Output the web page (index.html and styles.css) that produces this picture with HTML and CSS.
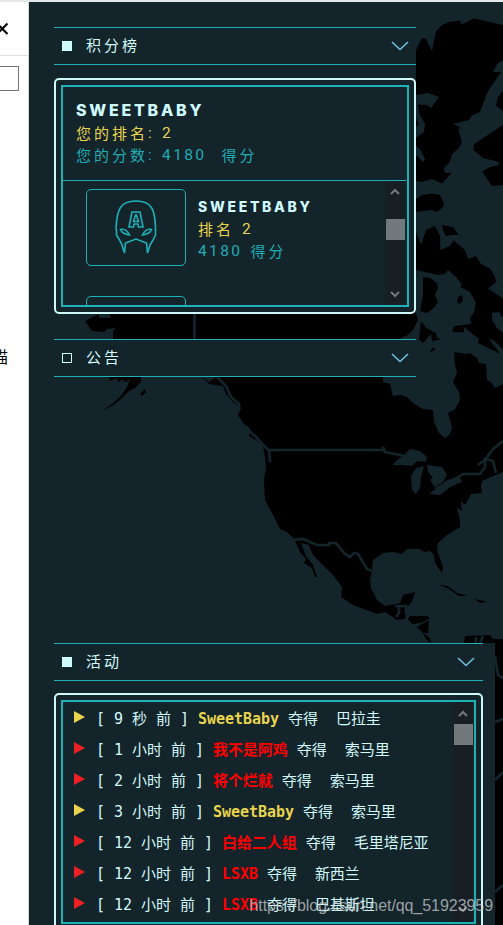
FILE: index.html
```html
<!DOCTYPE html>
<html lang="zh">
<head>
<meta charset="utf-8">
<title>积分榜</title>
<link rel="stylesheet" href="styles.css">
</head>
<body>
<div class="app">
  <aside class="side">
    <div class="side-head"><svg class="close" width="14" height="14" viewBox="0 0 14 14"><path d="M2 1.500 12.500 12M2 12 12.500 1.500"/></svg></div>
    <div class="side-input"></div>
    <div class="side-text">描</div>
  </aside>
  <main class="stage">
    <svg class="map" width="503" height="925" viewBox="0 0 503 925">
      <g class="land">
        <path d="M416 50 422 38 426 39 432 51 436 31 442 25 449 22 460 20.500 461.500 24.500 474 18.500 503 25V60L497 64 493 72H501L487 93 480 112 471 116 469 120 453 124 460 127 458.500 130 462 142 458 149 452 154 450 162 444 168 445 173 452 172.500 442 183.500 432 179 422 182 416 181Z"/>
        <path d="M503 91 498 97 496 106 503 111ZM503 125 474 144 473.500 150 483 158 499 162V165L490 167 482 171.500 492 186 503 185Z"/>
        <path d="M416 199 422 195 432 193.500 440 195 444 203 443 207 437 212 430 210 416 212ZM442 225 453 227 459 235 451 235 446 236.500 443 230Z"/>
        <path d="M416 232 421 245 426 230 435 226 440 236 440.500 250 450 246 453.500 240.500 465 250 468 259 476 256 481 264 490 268.500 494 275 496.500 282 488 288.500 503 298.500V472L497 477 485 482 481 487 482 493 471 494 465 505 461 501 462 511 457 507 460 520V527L447 535 438 543 437 550 443 567 442 573 435 563 434 555 430 551 424 552 420 549 407 549 402 554 393 552 383 553 373 560 372 571 370 580 371 588 377 600 385 606 400 603 403 595 415 592 412 602 407 607 405 619 397 620 393 617 385 612 377 614 353 605 341 597 342 587 333 575 325 567 313 555 309 545 301 543 306 556 313 565 317 577H315L312 568 304 563 306 559 300 552 294 539 287 532 280 529 272 513 265 500 264 480 266 468 265 457 263 446 256 440 249 436 250 428 244 424 238 415 241 408 232 401 226 394 223 386 209 384 203 377H109L113 339 113 331 116 328 107 329 104 332 92 331 85 321 99 314V318H111L109 313V300H416Z"/>
        <path d="M109 376H141V382L135 388 129 391 121 399 115 404 101 412 112 404 121 396 127 387 130 379 125 382 122 379 119 382 116 378 110 381ZM140 394 145 389 146 392 142 396Z"/>
        <path d="M408 619 410 616 427 616 430 618 421 623 412 624ZM417 627 429 620 428 633 423 633ZM423 633 430 638 431 643 426 639ZM439 585 448 586 457 593 468 596 459 596 449 589ZM475 599 480 600 487 602 480 603ZM464 643 465 636 490 635 493 639 503 639V925H495V643Z"/>
      </g>
      <g class="sea">
        <path d="M416 95 428 93 439 97 431 108 427 105 418 104.500 419 113 425 124 424 132 416 138V127L419 124 416 119ZM416 146 420 149 425 159 423 162 416 155Z"/>
        <path d="M416 270 438 275 445 274 448 270 456 277 462 285 460 287 470 292 476 303 474 312 470 318 471 324 454 326 452 332 464 332.500V327L479 339 478 343 488 348 500 353.500 489 339 493 340 503 349V384L495 388 491 382 487 380 486 364 479 363 477 358 470 353 466 354 454 352 455 365 457 373 453 382 459 392 460 400 455 409 448 413 452 427 450 434 445 438 439 433 434 422 433 410 423 409 413 403 407 397 400 395 393 396 390 384 383 382V375L401 338 408 335 413 330 418 320 416 314Z"/>
        <path d="M492 313 499 312 503 318V333L497 328 492 320ZM393 465 397 460 403 456 410 449 420 451 427 457 426 462 417 461 412 466 403 465ZM411 476 416 468 424 466 421 477 420 488 416 494 412 490ZM427 465 442 467 447 475 443 482 435 487 430 480 433 478 428 472ZM429 494 440 486 447 480 460 477 462 482 450 487 440 495ZM481 487 482 481 491 477 503 472V490Z"/>
        <path d="M203 377H216L209 382Z"/>
      </g>
      <g class="borders">
        <path d="M194.500 313V340M217 377 226 386 231 397 239 404V409L236 412M244 426 256 437 268 450H383V447L385 452 395 454 404 456M269 450 270 462"/>
        <path d="M293 540 303 539 317 545H329V543H336L345 554 350 557 354 553 358 554 367 569 372 571M435 489 450 482 463 474H480L485 467V459L493 461 496 473M478 465 485 460 493 449 503 441"/>
        <path d="M395 606H406V615M399 606V613L396 617M476 645V637M480 643 483 636M495 656 498 675 503 678M495 722 503 719M495 780 503 772M495 892 503 885"/>
      </g>
      <g class="land">
        <path d="M423 277 430 278 437 283 438 288 435 295 438 302 434 308 427 313 420 311 423 295ZM458 297 462 295 463 301 459 304 457 301ZM421 321 426 328 436 333 437 338 442 339 432 341 431 334 423 343 419 339ZM430 351 434 347 435 350 431 352Z"/>
      </g>
    </svg>

    <div class="content">
      <section class="block">
        <header class="bar"><i class="mark full"></i><h2>积分榜</h2><svg class="chev" width="18" height="10" viewBox="0 0 18 10"><path d="M1 1 9 8.500 17 1"/></svg></header>
        <div class="frame board"><div class="inner">
          <div class="me"><div class="name">SWEETBABY</div><div class="rank">您的排名<span class="colon">:</span><span class="num">2</span></div><div class="score">您的分数<span class="colon">:</span><span class="num">4180</span><span class="unit">得分</span></div></div>
          <div class="list">
            <div class="entries">
              <div class="entry">
                <div class="avatar"><svg width="42" height="56" viewBox="0 0 42 56"><path d="M9.500 53 7 45 4 39 1.500 35V31L1 28C2 10 5 1 21 1S40 10 40.500 28V35L38 40 35 45 32.500 53 31.500 43 21 39 10.500 43Z"/><path d="M14 27 17 12H25L28 27H23.500L23 24H19L18.500 27ZM20.500 15 18.500 21.500H23.500L21.500 15ZM5.500 29.500Q11 28 14.500 35 7 34 5.500 29.500ZM36.500 29.500Q31 28 27.500 35 35 34 36.500 29.500Z"/></svg></div>
                <div class="info"><div class="name small">SWEETBABY</div><div class="rank">排名<span class="num gap">2</span></div><div class="score"><span class="num">4180</span><span class="unit near">得分</span></div></div>
              </div>
              <div class="entry"><div class="avatar"></div></div>
            </div>
            <div class="scroll"><svg width="10" height="8" viewBox="0 0 10 8"><path d="M1 6 5 2 9 6"/></svg><b class="thumb"></b><svg class="down" width="10" height="8" viewBox="0 0 10 8"><path d="M1 2 5 6 9 2"/></svg></div>
          </div>
        </div></div>
      </section>
      <section class="block notice">
        <header class="bar"><i class="mark"></i><h2>公告</h2><svg class="chev" width="18" height="10" viewBox="0 0 18 10"><path d="M1 1 9 8.500 17 1"/></svg></header>
      </section>
      <section class="block activity">
        <header class="bar"><i class="mark full"></i><h2>活动</h2><svg class="chev" width="18" height="10" viewBox="0 0 18 10"><path d="M1 1 9 8.500 17 1"/></svg></header>
        <div class="frame feed"><div class="inner">
          <ul class="events">
            <li class="gold">[ 9 秒 前 ] <b>SweetBaby</b> 夺得  巴拉圭</li>
            <li>[ 1 小时 前 ] <b>我不是阿鸡</b> 夺得  索马里</li>
            <li>[ 2 小时 前 ] <b>将个烂就</b> 夺得  索马里</li>
            <li class="gold">[ 3 小时 前 ] <b>SweetBaby</b> 夺得  索马里</li>
            <li>[ 12 小时 前 ] <b>白给二人组</b> 夺得  毛里塔尼亚</li>
            <li>[ 12 小时 前 ] <b>LSXB</b> 夺得  新西兰</li>
            <li>[ 12 小时 前 ] <b>LSXB</b> 夺得  巴基斯坦</li>
          </ul>
          <div class="scroll"><svg width="10" height="8" viewBox="0 0 10 8"><path d="M1 6 5 2 9 6"/></svg><b class="thumb"></b><svg class="down" width="10" height="8" viewBox="0 0 10 8"><path d="M1 2 5 6 9 2"/></svg></div>
        </div></div>
      </section>
    </div>
  </main>
  <div class="watermark">https://blog.csdn.net/qq_51923959</div>
</div>
</body>
</html>
```
FILE: styles.css
```css
* { box-sizing: border-box; }
body { margin: 0; background: #fff; overflow: hidden; }
.app { position: relative; width: 503px; height: 925px; display: flex; overflow: hidden; border-top: 2px solid #e3e7e8; font-family: "Liberation Sans", "Noto Sans CJK SC", sans-serif; }
.side { width: 29px; flex: none; background: #fff; border-right: 1px solid #d5dade; overflow: hidden; }
.side-head { height: 54px; border-bottom: 1px solid #dedede; padding-top: 20px; }
.close { display: block; margin-left: -5px; fill: none; stroke: #000; stroke-width: 2; }
.side-input { width: 19px; height: 25px; margin-top: 10px; border: 1px solid #767676; border-left: 0; }
.side-text { margin: 253px 0 0 -8px; font: 16px/24px "Noto Sans CJK SC", sans-serif; color: #000; }
.stage { flex: 1; background: #14242b; min-width: 0; }
.map { position: absolute; left: 0; top: -2px; clip-path: inset(0 0 0 29px); }
.land { fill: #000; }
.sea { fill: #14242b; }
.borders { fill: none; stroke: #14242b; stroke-width: 2.700; }
.content { position: relative; padding: 25px 0 0 25px; }
.block { width: 362px; }
.bar { height: 38px; display: flex; align-items: center; padding: 0 7px 0 8px; border: solid #1fb1b8; border-width: 1px 0; background: #14242b; }
.mark { width: 10px; height: 10px; border: 1px solid #cff; }
.mark.full { background: #cff8fa; }
h2 { margin: -2px auto 0 14px; font: 400 15px/22px "Noto Sans CJK SC", sans-serif; letter-spacing: 3px; color: #d2fafa; }
.chev { fill: none; stroke: #70c2dc; stroke-width: 1.600; }
.activity .chev { margin-right: 1px; }
.frame { margin-top: 13px; border: 2px solid #cff8fa; border-radius: 5px; padding: 5px; background: #14242b; }
.board { height: 236px; }
.inner { height: 100%; border: 2px solid #1fb1b8; overflow: hidden; }
.me { height: 94px; padding: 13px 0 0 13px; margin: 0 1px 0 0; border-bottom: 1px solid #1fb1b8; }
.name { font: 800 16px/21px Inter, sans-serif; letter-spacing: 2.750px; color: #cffcff; }
.rank, .score { display: flex; font: 15px/22px "Noto Sans CJK SC", sans-serif; letter-spacing: 3px; }
.rank { color: #e8d44d; }
.score { color: #20acb4; }
.me .rank { margin-top: 1px; }
.num { font-family: Roboto, sans-serif; font-size: 15.500px; letter-spacing: 2.400px; }
.colon { width: 14px; font-family: Roboto, sans-serif; }
.unit { margin-left: 15px; }
.near { margin-left: 8px; }
.gap { margin-left: 8px; }
.list { height: 126px; display: flex; }
.entries { flex: 1; overflow: hidden; padding: 8px 0 0 23px; }
.entry { display: flex; height: 107px; gap: 12px; }
.avatar { width: 100px; height: 77px; border: 1px solid #1fb1b8; border-radius: 5px; display: flex; justify-content: center; padding-top: 10px; }
.avatar svg { fill: none; stroke: #1fb1b8; stroke-width: 1.600; }
.info { padding-top: 7px; }
.small { font-size: 14px; letter-spacing: 2.700px; }
.info .rank { margin-top: 1px; }
.scroll { width: 20px; flex: none; margin-right: 2px; background: #171f24; display: flex; flex-direction: column; align-items: center; padding: 7px 0 9px; }
.scroll svg { fill: none; stroke: #72797c; stroke-width: 2; }
.thumb { width: 19px; height: 21px; margin-top: 23px; background: #72797c; }
.down { margin-top: auto; }
.notice { margin-top: 25px; }
.activity { width: 429px; margin-top: 266px; box-shadow: 12px 0 0 #14242b; }
.feed { height: 238px; margin-top: 12px; }
.feed .inner { display: flex; height: 224px; }
.feed .scroll { margin-right: 1px; padding-top: 8px; }
.feed .thumb { margin-top: 6px; }
.events { flex: 1; list-style: none; margin: 0; padding: 2px 0 0 11px; }
.events li { display: flex; align-items: center; height: 31px; white-space: pre; font: 15px/31px "DejaVu Sans Mono", "Noto Sans CJK SC", monospace; letter-spacing: -.03px; color: #d2fafa; }
.events li::before { content: ""; border-left: 11px solid #ed2024; border-top: 6.500px solid transparent; border-bottom: 6.500px solid transparent; margin: -5px 11px 0 0; }
.events li.gold::before { border-left-color: #e8d44d; }
.events b { color: #f00; }
.events .gold b { color: #e8d44d; }
.watermark { position: absolute; right: 10px; top: 894px; font: 16px/20px "Liberation Sans", sans-serif; letter-spacing: -.06px; color: rgba(200, 204, 206, .75); }
```
